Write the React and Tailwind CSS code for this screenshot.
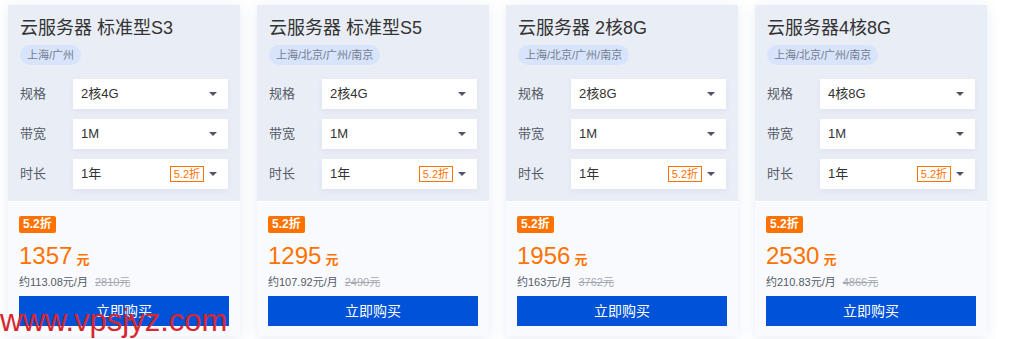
import React from "react";

const plans = [
  { title: "云服务器 标准型S3", region: "上海/广州", spec: "2核4G", price: "1357", month: "约113.08元/月", orig: "2810元" },
  { title: "云服务器 标准型S5", region: "上海/北京/广州/南京", spec: "2核4G", price: "1295", month: "约107.92元/月", orig: "2490元" },
  { title: "云服务器 2核8G", region: "上海/北京/广州/南京", spec: "2核8G", price: "1956", month: "约163元/月", orig: "3762元" },
  { title: "云服务器4核8G", region: "上海/北京/广州/南京", spec: "4核8G", price: "2530", month: "约210.83元/月", orig: "4866元" },
];

function Caret() {
  return (
    <svg width="8" height="4" viewBox="0 0 8 4" className="shrink-0">
      <path d="M0 0 H8 L4 4 Z" fill="#4d5566" />
    </svg>
  );
}

function Select({ value, tag }) {
  return (
    <div className="flex-1 h-[30px] bg-white flex items-center pl-[8px] pr-[11px] shadow-[0_2px_6px_rgba(80,110,170,0.08)]">
      <span className="flex-1 text-[13px] text-[#333]">{value}</span>
      {tag && (
        <span className="h-[16px] px-[3px] mr-[5px] border border-[#ff7200] text-[#ff7200] text-[11px] leading-[14px]">
          {tag}
        </span>
      )}
      <Caret />
    </div>
  );
}

function Row({ label, children }) {
  return (
    <div className="flex items-center">
      <span className="w-[53px] text-[13px] text-[#555b66]">{label}</span>
      {children}
    </div>
  );
}

function Card({ p }) {
  return (
    <div className="w-[232px] flex flex-col shadow-[0_2px_12px_rgba(60,100,170,0.12)]">
      <div className="bg-[#e9edf6] px-[12px] pt-[11px] pb-[12px]">
        <div className="text-[18px] leading-[24px] text-[#333]">{p.title}</div>
        <div className="mt-[5px] flex">
          <span className="h-[20px] px-[7px] rounded-full bg-[#d8e4fb] text-[11px] leading-[20px] text-[#727c8f]">
            {p.region}
          </span>
        </div>
        <div className="mt-[14px] flex flex-col gap-[10px]">
          <Row label="规格"><Select value={p.spec} /></Row>
          <Row label="带宽"><Select value="1M" /></Row>
          <Row label="时长"><Select value="1年" tag="5.2折" /></Row>
        </div>
      </div>
      <div className="bg-[#f9fafd] border-t border-white px-[11px] pt-[14px] pb-[10px] flex flex-col">
        <div className="flex">
          <span className="h-[17px] px-[4px] rounded-[2px] bg-[#ff7200] text-white text-[12px] font-bold leading-[17px]">
            5.2折
          </span>
        </div>
        <div className="mt-[8px] flex items-baseline text-[#ff7200] leading-[30px]">
          <span className="text-[24px]">{p.price}</span>
          <span className="ml-[4px] text-[13px] font-bold">元</span>
        </div>
        <div className="flex items-center text-[11px] leading-[14px]">
          <span className="text-[#555b66]">{p.month}</span>
          <span className="ml-[7px] text-[#a3a8b3] line-through">{p.orig}</span>
        </div>
        <button className="mt-[7px] h-[30px] w-full bg-[#0052d9] text-white text-[14px]">立即购买</button>
      </div>
    </div>
  );
}

export default function App() {
  return (
    <div
      className="relative w-[1009px] h-[339px] bg-white overflow-hidden"
      style={{ fontFamily: '"Liberation Sans", "Noto Sans CJK SC", sans-serif' }}
    >
      <div className="flex gap-[17px] pl-[8px] pt-[5px]">
        {plans.map((p) => (
          <Card key={p.title} p={p} />
        ))}
      </div>
      {/* watermark */}
      <div className="absolute left-[0px] top-[304px] text-[31px] leading-[34px] text-[#d8262e]">www.vpsjyz.com</div>
      <div className="absolute left-[128px] top-[317px] w-[4px] h-[4px] rounded-full bg-[#d8262e]" />
    </div>
  );
}
